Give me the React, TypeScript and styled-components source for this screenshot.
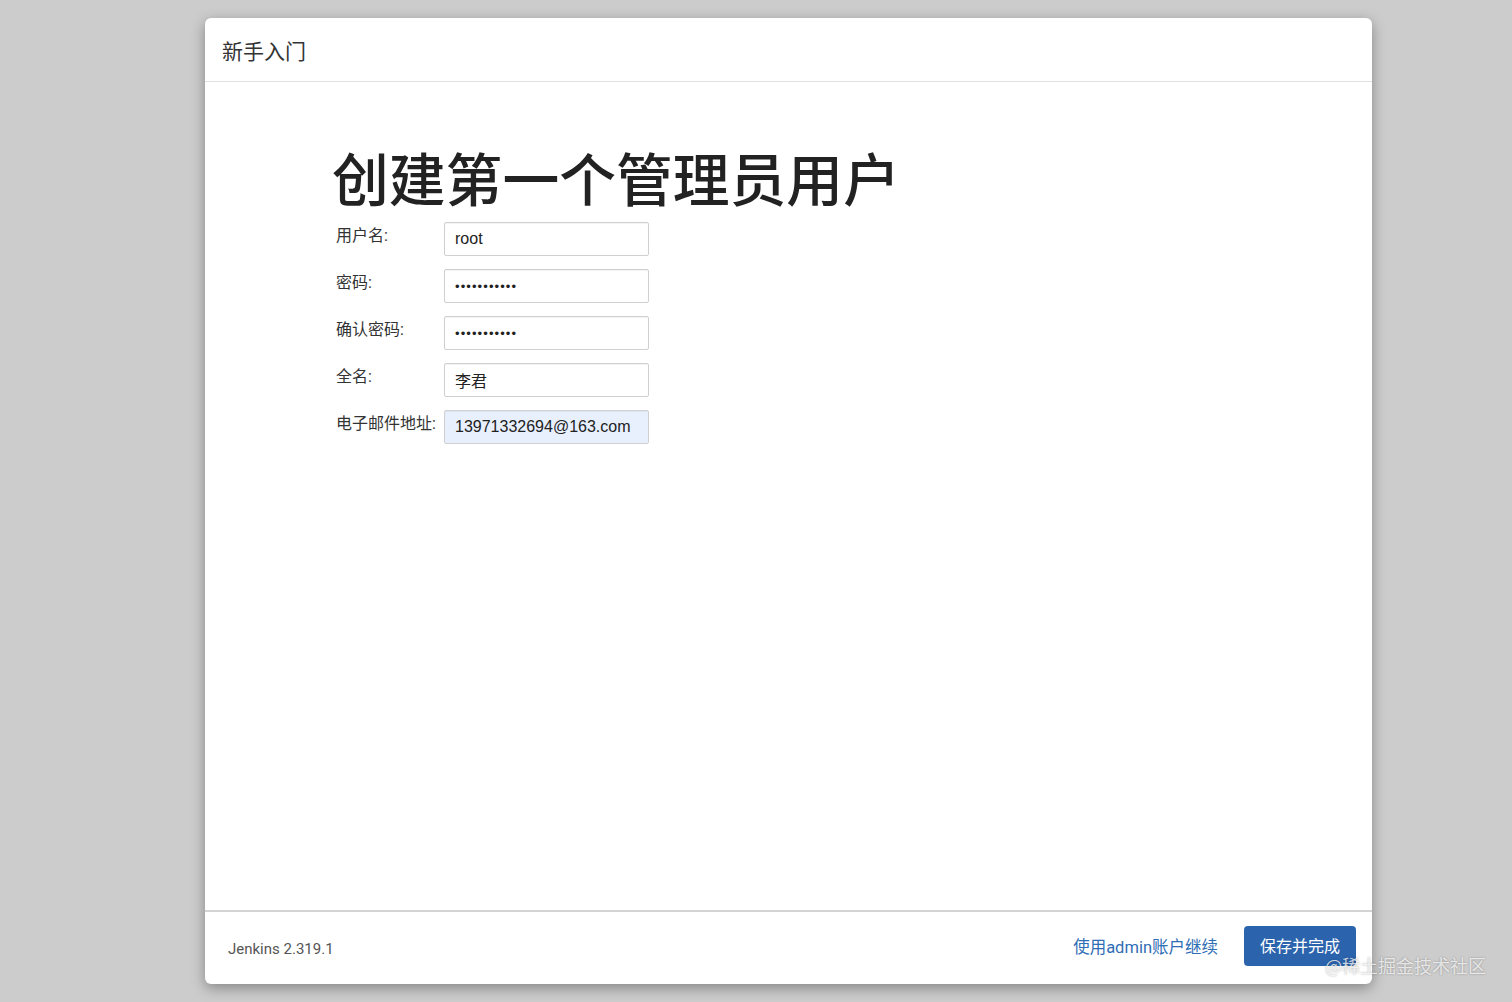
import React from "react";
import styled, { createGlobalStyle } from "styled-components";

const GlobalStyle = createGlobalStyle`
    html, body {
        margin: 0;
        padding: 0;
        background: #cccccc;
        font-family: Roboto, "Noto Sans CJK SC", sans-serif;
        color: #333;
    }
`;

const Page = styled.div`
    width: 1512px;
    height: 1002px;
    position: relative;
    overflow: hidden;
    padding: 18px 0 0 205px;
    box-sizing: border-box;
`;

const Modal = styled.div`
    width: 1167px;
    height: 966px;
    background: #fff;
    border-radius: 6px;
    box-shadow: 0 4px 14px rgba(0, 0, 0, 0.35);
    display: flex;
    flex-direction: column;
    overflow: hidden;
`;

const Header = styled.div`
    height: 64px;
    border-bottom: 1px solid #e1e1e1;
    display: flex;
    align-items: center;
    padding-left: 17px;
    box-sizing: border-box;
    font-size: 21px;
    color: #333;
`;

const Body = styled.div`
    flex: 1;
    padding: 61px 0 0 127px;
`;

const Heading = styled.h1`
    margin: 0 0 13px 0;
    font-family: "Noto Sans CJK SC", sans-serif;
    font-size: 56.8px;
    font-weight: 500;
    line-height: 66px;
    color: #222;
`;

const Form = styled.div`
    display: flex;
    flex-direction: column;
    gap: 13px;
`;

const Row = styled.div`
    display: flex;
    align-items: flex-start;
`;

const Label = styled.label`
    width: 112px;
    padding-left: 4px;
    box-sizing: border-box;
    font-size: 16px;
    line-height: 28px;
    color: #333;
`;

const Input = styled.div<{ $filled?: boolean }>`
    width: 205px;
    height: 34px;
    box-sizing: border-box;
    border: 1px solid #d0d0d0;
    border-radius: 2px;
    box-shadow: inset 0 1px 1px rgba(0, 0, 0, 0.05);
    background: ${(p) => (p.$filled ? "#e8f0fe" : "#fff")};
    padding: 0 10px;
    display: flex;
    align-items: center;
    font-family: "Liberation Sans", "Noto Sans CJK SC", sans-serif;
    font-size: 16px;
    color: #222;
`;

const Dots = styled.span`
    font-size: 13px;
    letter-spacing: 1.1px;
    font-family: "Liberation Sans", sans-serif;
`;

const Footer = styled.div`
    height: 74px;
    border-top: 2px solid #d4d4d4;
    box-sizing: border-box;
    display: flex;
    align-items: center;
    padding: 0 16px 0 23px;
`;

const Version = styled.div`
    font-size: 15px;
    color: #555;
    flex: 1;
    padding-top: 2px;
`;

const Link = styled.a`
    color: #2f6db5;
    font-size: 16.5px;
    text-decoration: none;
    margin: -5px 26px 0 0;
`;

const PrimaryButton = styled.button`
    width: 112px;
    height: 40px;
    border: none;
    border-radius: 4px;
    background: #2b64ad;
    color: #fff;
    font-family: "Noto Sans CJK SC", sans-serif;
    font-size: 16px;
    margin-top: -4px;
    padding-bottom: 3px;
`;

const Watermark = styled.div`
    position: absolute;
    left: 1325px;
    top: 952px;
    font-family: "Noto Sans CJK SC", sans-serif;
    font-size: 18px;
    color: rgba(255, 255, 255, 0.75);
    text-shadow: 0 0 2px rgba(0, 0, 0, 0.35);
`;

const fields = [
    { label: "用户名:", value: "root" },
    { label: "密码:", value: "•••••••••••", secret: true },
    { label: "确认密码:", value: "•••••••••••", secret: true },
    { label: "全名:", value: "李君" },
    { label: "电子邮件地址:", value: "13971332694@163.com", filled: true },
];

export default function App() {
    return (
        <Page>
            <GlobalStyle />
            <Modal>
                <Header>新手入门</Header>
                <Body>
                    <Heading>创建第一个管理员用户</Heading>
                    <Form>
                        {fields.map((f, i) => (
                            <Row key={i}>
                                <Label>{f.label}</Label>
                                <Input $filled={f.filled}>
                                    {f.secret ? <Dots>{f.value}</Dots> : f.value}
                                </Input>
                            </Row>
                        ))}
                    </Form>
                </Body>
                <Footer>
                    <Version>Jenkins 2.319.1</Version>
                    <Link href="#">使用admin账户继续</Link>
                    <PrimaryButton>保存并完成</PrimaryButton>
                </Footer>
            </Modal>
            <Watermark>@稀土掘金技术社区</Watermark>
        </Page>
    );
}
